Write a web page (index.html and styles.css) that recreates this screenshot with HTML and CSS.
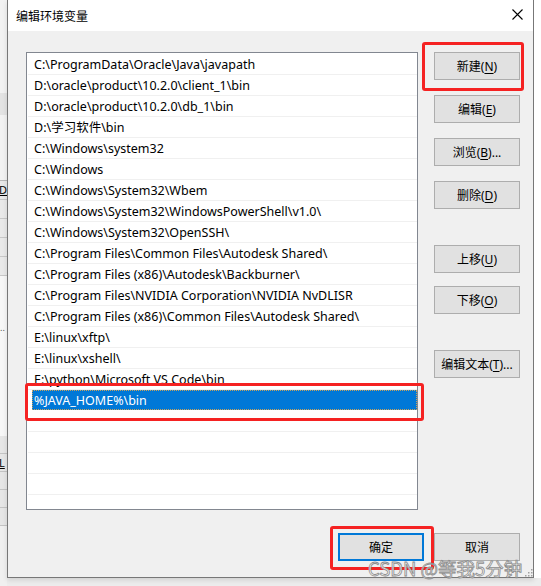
FILE: index.html
```html
<!DOCTYPE html>
<html lang="zh-CN">
<head>
<meta charset="utf-8">
<title>编辑环境变量</title>
<link rel="stylesheet" href="styles.css">
</head>
<body>
<div class="screen">
  <div class="bgwin">
    <div class="bg-a"></div>
    <div class="bg-band"></div>
    <div class="bg-b"></div>
    <div class="bg-rows">
      <div class="bg-row bg-text"><u>D</u></div>
      <div class="bg-row"></div>
      <div class="bg-row"></div>
      <div class="bg-row"></div>
      <div class="bg-row"></div>
    </div>
    <div class="bg-white"><span class="bg-dots">..</span></div>
    <div class="bg-rows2">
      <div class="bg-row2"></div>
      <div class="bg-row2 bg-text"><u>L</u></div>
      <div class="bg-row2"></div>
      <div class="bg-row2"></div>
      <div class="bg-row2"></div>
    </div>
  </div>

  <div class="dialog">
    <div class="titlebar">
      <span class="title">编辑环境变量</span>
      <svg class="close" width="11" height="11" viewBox="0 0 11 11"><path d="M0.5 0.5 L10.5 10.5 M10.5 0.5 L0.5 10.5" stroke="#000" stroke-width="1.1" fill="none"/></svg>
    </div>
    <div class="content">
      <div class="list">
        <div class="row"><span class="cell">C:\ProgramData\Oracle\Java\javapath</span></div>
        <div class="row"><span class="cell">D:\oracle\product\10.2.0\client_1\bin</span></div>
        <div class="row"><span class="cell">D:\oracle\product\10.2.0\db_1\bin</span></div>
        <div class="row"><span class="cell">D:\学习软件\bin</span></div>
        <div class="row"><span class="cell">C:\Windows\system32</span></div>
        <div class="row"><span class="cell">C:\Windows</span></div>
        <div class="row"><span class="cell">C:\Windows\System32\Wbem</span></div>
        <div class="row"><span class="cell">C:\Windows\System32\WindowsPowerShell\v1.0\</span></div>
        <div class="row"><span class="cell">C:\Windows\System32\OpenSSH\</span></div>
        <div class="row"><span class="cell">C:\Program Files\Common Files\Autodesk Shared\</span></div>
        <div class="row"><span class="cell">C:\Program Files (x86)\Autodesk\Backburner\</span></div>
        <div class="row"><span class="cell">C:\Program Files\NVIDIA Corporation\NVIDIA NvDLISR</span></div>
        <div class="row"><span class="cell">C:\Program Files (x86)\Common Files\Autodesk Shared\</span></div>
        <div class="row"><span class="cell">E:\linux\xftp\</span></div>
        <div class="row"><span class="cell">E:\linux\xshell\</span></div>
        <div class="row"><span class="cell">E:\python\Microsoft VS Code\bin</span></div>
        <div class="row selected"><span class="cell">%JAVA_HOME%\bin</span></div>
        <div class="row"><span class="cell"></span></div>
        <div class="row"><span class="cell"></span></div>
        <div class="row"><span class="cell"></span></div>
        <div class="row"><span class="cell"></span></div>
      </div>
      <div class="side">
        <button class="btn b-new">新建(<u>N</u>)</button>
        <button class="btn b-edit">编辑(<u>E</u>)</button>
        <button class="btn b-browse">浏览(<u>B</u>)...</button>
        <button class="btn b-del">删除(<u>D</u>)</button>
        <button class="btn b-up">上移(<u>U</u>)</button>
        <button class="btn b-down">下移(<u>O</u>)</button>
        <button class="btn b-text">编辑文本(<u>T</u>)...</button>
      </div>
    </div>
    <div class="footer">
      <button class="btn default">确定</button>
      <button class="btn">取消</button>
    </div>
  </div>
  <div class="rightstrip"></div>

  <div class="mark mark-new"></div>
  <div class="mark mark-row"></div>
  <div class="mark mark-ok"></div>
  <div class="watermark">CSDN @等我5分钟</div>
  <svg class="grip" width="8" height="8" viewBox="0 0 8 8"><g fill="#a0a0a0"><rect x="6" y="0" width="1.5" height="1.5"/><rect x="3" y="3" width="1.5" height="1.5"/><rect x="6" y="3" width="1.5" height="1.5"/><rect x="0" y="6" width="1.5" height="1.5"/><rect x="3" y="6" width="1.5" height="1.5"/><rect x="6" y="6" width="1.5" height="1.5"/></g></svg>
</div>
</body>
</html>
```

FILE: styles.css
```css
html, body {
  margin: 0;
  padding: 0;
}
body {
  width: 541px;
  height: 586px;
  overflow: hidden;
  background: #ececec;
  font-family: "Noto Sans", "Noto Sans CJK SC", sans-serif;
  font-size: 12px;
  color: #000;
}
.screen {
  position: relative;
  width: 541px;
  height: 586px;
  display: flex;
  align-items: flex-start;
  background: #ececec;
}

/* background window strip on the left */
.bgwin {
  width: 7px;
  height: 586px;
  flex: none;
  display: flex;
  flex-direction: column;
  background: #f0f0f0;
  overflow: hidden;
}
.bg-a { height: 93px; background: #f2f2f2; }
.bg-band { height: 22px; background: #e3e3e3; }
.bg-b { height: 65px; background: #f2f2f2; border-bottom: 1px solid #b8b8b8; }
.bg-rows { display: flex; flex-direction: column; background: #e9e9e9; }
.bg-row { height: 18px; border-bottom: 1px solid #c8c8c8; line-height: 18px; }
.bg-text { font-size: 11px; margin-left: -1px; }
.bg-white { height: 160px; background: #f7f7f7; }
.bg-dots { display: block; margin-top: 46px; font-size: 9px; line-height: 12px; color: #555; }
.bg-rows2 { display: flex; flex-direction: column; background: #e6e6e6; }
.bg-row2 { height: 17px; border-bottom: 1px solid #c4c4c4; line-height: 17px; }

.rightstrip {
  flex: 1;
  height: 578px;
  background: #fff;
}

/* dialog */
.dialog {
  width: 527px;
  height: 578px;
  flex: none;
  box-sizing: border-box;
  border: 1px solid #777;
  border-top: none;
  background: #f0f0f0;
  display: flex;
  flex-direction: column;
  box-shadow: 0 2px 5px rgba(0,0,0,0.12);
}
.titlebar {
  height: 31px;
  background: #fff;
  display: flex;
  align-items: center;
  justify-content: space-between;
  padding: 0 10px 0 8px;
  flex: none;
}
.title {
  font-family: "Noto Sans CJK SC", sans-serif;
  font-size: 12px;
  margin-top: -1px;
}
.close { display: block; margin-top: -2px; }

.content {
  display: flex;
  align-items: flex-start;
  gap: 16px;
  padding: 21px 13px 0 18px;
}
.list {
  width: 392px;
  height: 458px;
  box-sizing: border-box;
  border: 1px solid #828790;
  background: #fff;
  padding-top: 1px;
  overflow: hidden;
  display: flex;
  flex-direction: column;
}
.row {
  height: 21px;
  flex: none;
  box-sizing: border-box;
  border-bottom: 1px solid #f0f0f0;
  margin-left: 1px;
  display: flex;
  padding-left: 4px;
}
.cell {
  flex: 1;
  display: flex;
  align-items: center;
  padding: 2px 0 0 2px;
  font-size: 12.5px;
  line-height: 18px;
  white-space: nowrap;
}
.row.selected {
  border-bottom-color: #fff;
}
.row.selected .cell {
  background: #0078d7;
  color: #fff;
  box-sizing: border-box;
  border: 1px dotted #c9a25a;
  padding: 1px 0 0 1px;
}

.side {
  width: 86px;
  display: flex;
  flex-direction: column;
}
.btn {
  font-family: "Noto Sans", "Noto Sans CJK SC", sans-serif;
  font-size: 12px;
  color: #000;
  width: 86px;
  height: 28px;
  box-sizing: border-box;
  background: #e1e1e1;
  border: 1px solid #adadad;
  border-radius: 0;
  padding: 0;
  display: flex;
  align-items: center;
  justify-content: center;
}
.btn u { text-underline-offset: 2px; }
.b-edit, .b-browse, .b-del { margin-top: 15px; }
.b-up { margin-top: 36px; }
.b-down { margin-top: 13px; }
.b-text { margin-top: 36px; }

.footer {
  display: flex;
  justify-content: flex-end;
  gap: 10px;
  padding: 23px 13px 0 0;
}
.btn.default {
  border: 2px solid #0078d7;
}

/* annotation overlays */
.mark {
  position: absolute;
  box-sizing: border-box;
  border: 3px solid #f52222;
  border-radius: 3px;
}
.mark-new { left: 422px; top: 42px; width: 102px; height: 49px; }
.mark-row { left: 25px; top: 383px; width: 399px; height: 38px; }
.mark-ok { left: 330px; top: 526px; width: 104px; height: 44px; }

.watermark {
  position: absolute;
  left: 368px;
  top: 555px;
  font-family: "Noto Sans CJK SC", sans-serif;
  font-size: 18.5px;
  line-height: 26px;
  color: rgba(248,248,248,0.9);
  -webkit-text-stroke: 0.8px #8c8c8c;
  white-space: nowrap;
}
.grip {
  position: absolute;
  left: 525px;
  top: 569px;
}
```
